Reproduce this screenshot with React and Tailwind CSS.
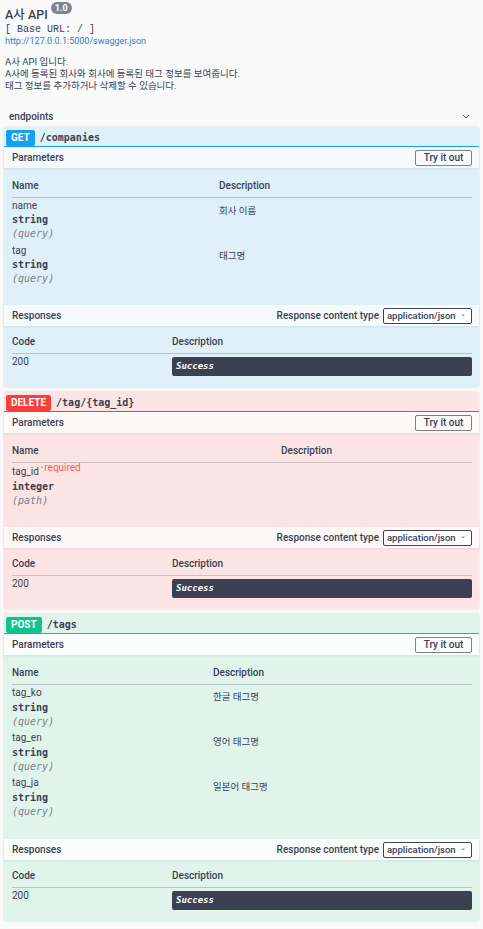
import React from "react";

const SANS = "font-['Roboto','Noto_Sans_CJK_KR',sans-serif]";
const MONO = "font-['DejaVu_Sans_Mono',monospace]";

const schemes = {
  get: {
    bg: "bg-[#e0f0f9]",
    bar: "bg-[#f6fafd]",
    badge: "bg-[#16a1f0]",
    line: "border-[#16a1f0]",
  },
  delete: {
    bg: "bg-[#fde4e4]",
    bar: "bg-[#fef9f9]",
    badge: "bg-[#f73e3e]",
    line: "border-[#f73e3e]",
  },
  post: {
    bg: "bg-[#e0f4ec]",
    bar: "bg-[#f8fcfa]",
    badge: "bg-[#10c28e]",
    line: "border-[#10c28e]",
  },
};

function Chevron() {
  return (
    <svg width="8" height="5" viewBox="0 0 8 5" className="text-[#555]">
      <path d="M1 1 L4 4 L7 1" fill="none" stroke="currentColor" strokeWidth="1" />
    </svg>
  );
}

function Block({ kind, method, path, params, nameW, nameLeading, firstPt, rowPb, paramsPb }) {
  const s = schemes[kind];
  return (
    <div className={`mx-[4px] ${s.bg} rounded-[2px] shadow-[0_0_2px_rgba(0,0,0,0.18)]`}>
      <div className={`flex items-end h-[20px] border-b ${s.line} pl-[2px]`}>
        <span
          className={`${s.badge} text-white font-bold text-[10px] leading-[16px] h-[16px] px-[5px] rounded-[2px] ${SANS}`}
        >
          {method}
        </span>
        <span className={`ml-[5px] mb-[1px] ${MONO} font-bold text-[10px] leading-[14px] text-[#3b4151]`}>
          {path}
        </span>
      </div>
      <div
        className={`h-[21px] ${s.bar} flex items-center justify-between pl-[8px] pr-[7px] shadow-[0_1px_2px_rgba(0,0,0,0.08)]`}
      >
        <span className="text-[10px] font-medium text-[#3b4151]">Parameters</span>
        <button className="h-[16px] w-[57px] border border-[#808080] rounded-[2px] text-[10px] leading-[14px] font-medium text-[#3b4151] bg-transparent">
          Try it out
        </button>
      </div>
      <div className={`pl-[8px] pr-[7px] pt-[11px] ${paramsPb}`}>
        <div className="flex border-b border-[#3b4151]/25 pb-[4px] text-[10px] leading-[14px] font-medium text-[#3b4151]">
          <div style={{ width: nameW }} className="shrink-0">Name</div>
          <div>Description</div>
        </div>
        {params.map((p, i) => (
          <div key={i} className={`flex ${i === 0 ? firstPt : ""} ${rowPb}`}>
            <div style={{ width: nameW }} className="shrink-0">
              <div className={`text-[10px] ${nameLeading} text-[#3b4151] flex items-start`}>
                <span>{p.name}</span>
                {p.required && (
                  <span className="text-[10px] leading-[12px] text-[#ff5a5a] ml-[2px] -mt-[1px]">
                    <span className="text-[7px] relative -top-[1px] mr-[1px]">•</span>required
                  </span>
                )}
              </div>
              <div className={`${MONO} font-bold text-[10px] leading-[14px] text-[#3b4151]`}>{p.type}</div>
              <div className={`${MONO} italic text-[10px] leading-[14px] text-[#7b7f87]`}>({p.in})</div>
            </div>
            <div className="pt-[5px] text-[9.5px] leading-[14px] text-[#3b4151]">{p.desc}</div>
          </div>
        ))}
      </div>
      <div
        className={`h-[21px] ${s.bar} flex items-center justify-between pl-[8px] pr-[7px] shadow-[0_1px_2px_rgba(0,0,0,0.08)]`}
      >
        <span className="text-[10px] font-medium text-[#3b4151]">Responses</span>
        <div className="flex items-center">
          <span className="text-[10px] font-medium text-[#3b4151] mr-[4px]">Response content type</span>
          <div className="h-[16px] w-[89px] border border-[#41444e] rounded-[2px] bg-white/70 flex items-center justify-between pl-[3px] pr-[5px]">
            <span className="text-[9.5px] leading-[14px] font-medium text-[#3b4151]">application/json</span>
            <span className="text-[7px] text-[#555] leading-[7px] -mt-[3px]">⌄</span>
          </div>
        </div>
      </div>
      <div className="pl-[8px] pr-[7px] pt-[9px] pb-[11px]">
        <div className="flex border-b border-[#3b4151]/25 pb-[4px] text-[10px] leading-[14px] font-medium text-[#3b4151]">
          <div className="w-[160px] shrink-0">Code</div>
          <div>Description</div>
        </div>
        <div className="flex pt-[1px]">
          <div className="w-[160px] shrink-0 text-[10px] leading-[14px] text-[#3b4151]">200</div>
          <div className="flex-1 pt-[2px]">
            <div className="h-[19px] bg-[#3b4151] rounded-[2px] flex items-center px-[4px]">
              <span className={`${MONO} italic font-bold text-[9px] text-white`}>Success</span>
            </div>
          </div>
        </div>
      </div>
    </div>
  );
}

export default function App() {
  return (
    <div className={`min-h-[929px] w-full bg-[#fafafa] ${SANS} text-[#3b4151] pb-[6px]`}>
      <div className="px-[5px] pt-[7px]">
        <div className="flex items-start leading-[16px]">
          <span className="text-[12.5px] font-medium">A사 API</span>
          <span className="ml-[3px] -mt-[5px] bg-[#7d8492] text-white text-[9px] font-bold leading-[12px] px-[4px] rounded-full">
            1.0
          </span>
        </div>
        <div className="mt-[1px] font-['Liberation_Mono',monospace] text-[10px] leading-[12px]">[ Base URL: / ]</div>
        <div className="text-[9px] leading-[11px] text-[#1a7fd4]">http://127.0.0.1:5000/swagger.json</div>
        <div className="mt-[9px] text-[9.5px] leading-[12px]">
          <div>A사 API 입니다.</div>
          <div>A사에 등록된 회사와 회사에 등록된 태그 정보를 보여줍니다.</div>
          <div>태그 정보를 추가하거나 삭제할 수 있습니다.</div>
        </div>
      </div>
      <div className="mt-[17px] flex items-center justify-between pl-[9px] pr-[13px] h-[14px]">
        <span className="text-[10px] font-medium">endpoints</span>
        <Chevron />
      </div>
      <div className="mt-[4px] flex flex-col gap-[5px]">
        <Block
          kind="get"
          method="GET"
          path="/companies"
          nameW={207}
          nameLeading="leading-[14px]"
          firstPt="pt-[1px]"
          rowPb="pb-[3px]"
          paramsPb="pb-[16px]"
          params={[
            { name: "name", type: "string", in: "query", desc: "회사 이름" },
            { name: "tag", type: "string", in: "query", desc: "태그명" },
          ]}
        />
        <Block
          kind="delete"
          method="DELETE"
          path="/tag/{tag_id}"
          nameW={269}
          nameLeading="leading-[17px]"
          firstPt=""
          rowPb="pb-[2px]"
          paramsPb="pb-[17px]"
          params={[{ name: "tag_id", type: "integer", in: "path", desc: "", required: true }]}
        />
        <Block
          kind="post"
          method="POST"
          path="/tags"
          nameW={201}
          nameLeading="leading-[16px]"
          firstPt=""
          rowPb="pb-[1px]"
          paramsPb="pb-[19px]"
          params={[
            { name: "tag_ko", type: "string", in: "query", desc: "한글 태그명" },
            { name: "tag_en", type: "string", in: "query", desc: "영어 태그명" },
            { name: "tag_ja", type: "string", in: "query", desc: "일본어 태그명" },
          ]}
        />
      </div>
    </div>
  );
}
